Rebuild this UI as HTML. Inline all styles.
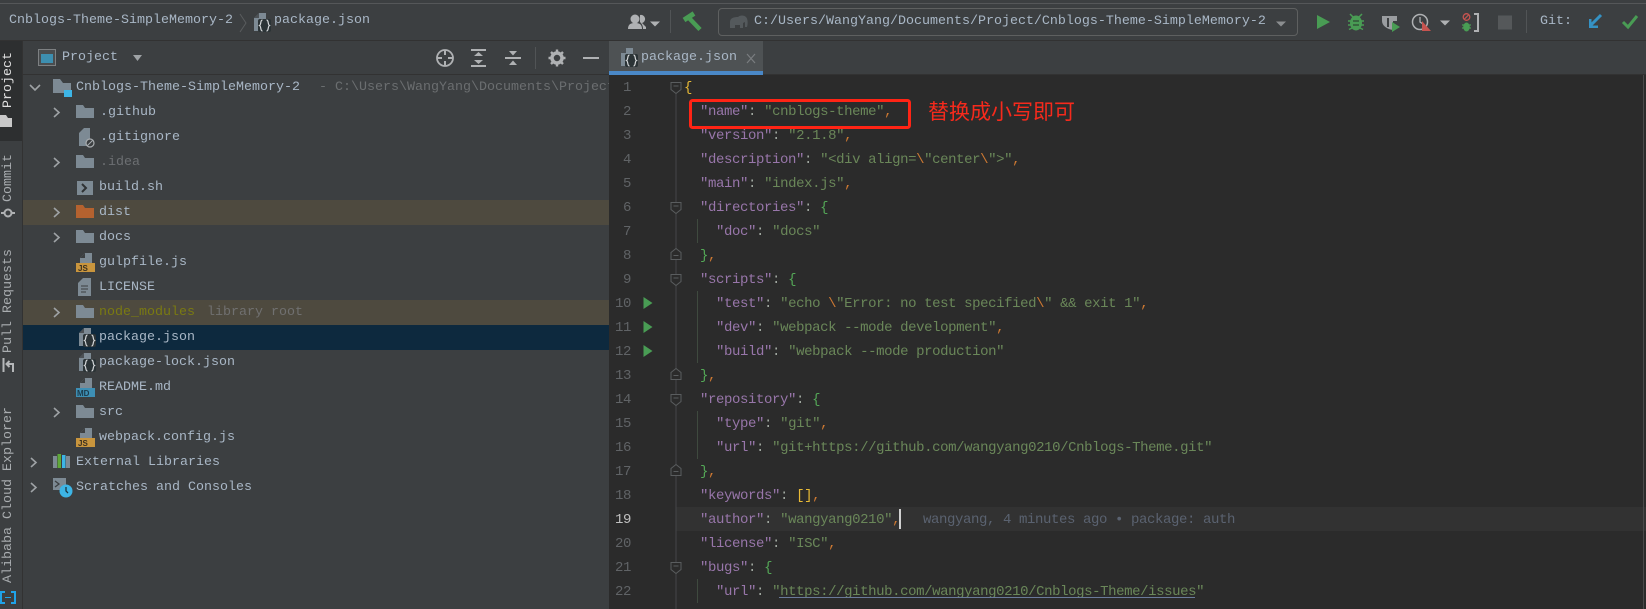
<!DOCTYPE html>
<html><head><meta charset="utf-8"><style>
html,body{margin:0;padding:0;background:#3c3f41}
#r{position:relative;width:1646px;height:609px;overflow:hidden;background:#3c3f41;font-family:"Liberation Mono",monospace;font-size:13.33px;color:#a9b7c6}
#r div{position:absolute;white-space:pre}
.t{height:25px;line-height:25px}
#r .v{writing-mode:vertical-rl;transform:rotate(180deg);left:1px;width:15px;line-height:15px;text-align:left;color:#a9adb0}
.l{left:684px;height:24px;line-height:24px;font-size:14px;letter-spacing:-.4px;color:#a9b7c6;margin-top:1px}
.n{left:600px;width:31px;text-align:right;height:24px;line-height:24px;font-size:14px;letter-spacing:-.4px;color:#606366;margin-top:1px}
i{font-style:normal}.k{color:#9876aa}.s{color:#6a8759}.c{color:#cc7832}.y{color:#e8ba36}.g{color:#54a857}.p{color:#a0a8a0}
svg{position:absolute;left:0;top:0}
</style></head><body><div id="r">
<div style="left:0;top:3px;width:1646px;height:1px;background:#555759"></div>
<div style="left:0;top:40px;width:1646px;height:1px;background:#323232"></div>
<div style="left:0;top:41px;width:22px;height:100px;background:#2d2f30"></div>
<div style="left:22px;top:41px;width:1px;height:568px;background:#323232"></div>
<div style="left:23px;top:74px;width:586px;height:1px;background:#323232"></div>
<div style="left:23px;top:200px;width:586px;height:25px;background:#4e4a3f"></div>
<div style="left:23px;top:300px;width:586px;height:25px;background:#4e4a3f"></div>
<div style="left:23px;top:325px;width:586px;height:25px;background:#0d293e"></div>
<div style="left:609px;top:75px;width:1037px;height:534px;background:#2b2b2b"></div>
<div style="left:609px;top:74px;width:1037px;height:1px;background:#323232"></div>
<div style="left:609px;top:41px;width:154px;height:30px;background:#4e5254"></div>
<div style="left:609px;top:71px;width:154px;height:4px;background:#4a88c7"></div>
<div style="left:676px;top:507px;width:970px;height:24px;background:#323232"></div>
<div style="left:1643px;top:75px;width:1px;height:534px;background:#4a4a4a"></div>
<div style="left:718px;top:8px;width:578px;height:26px;border:1.5px solid #5e6060;border-radius:4px"></div>

<div class="t" style="left:9px;top:8px">Cnblogs-Theme-SimpleMemory-2</div>
<div class="t" style="left:274px;top:8px">package.json</div>
<div class="t" style="left:754px;top:9px">C:/Users/WangYang/Documents/Project/Cnblogs-Theme-SimpleMemory-2</div>
<div class="t" style="left:1540px;top:9px">Git:</div>
<div class="t" style="left:62px;top:45px">Project</div>
<div class="t" style="left:641px;top:45px">package.json</div>

<div class="v" style="top:52px;height:56px;color:#e0e0e0">Project</div>
<div class="v" style="top:154px;height:48px">Commit</div>
<div class="v" style="top:249px;height:104px">Pull Requests</div>
<div class="v" style="top:407px;height:176px">Alibaba Cloud Explorer</div>

<div class="t" style="left:76px;top:75px">Cnblogs-Theme-SimpleMemory-2</div>
<div class="t" style="left:319px;top:75px;width:290px;overflow:hidden;color:#6b6e70">- C:\Users\WangYang\Documents\Project</div>
<div class="t" style="left:100px;top:100px">.github</div>
<div class="t" style="left:100px;top:125px">.gitignore</div>
<div class="t" style="left:100px;top:150px;color:#6c6f72">.idea</div>
<div class="t" style="left:99px;top:175px">build.sh</div>
<div class="t" style="left:99px;top:200px">dist</div>
<div class="t" style="left:99px;top:225px">docs</div>
<div class="t" style="left:99px;top:250px">gulpfile.js</div>
<div class="t" style="left:99px;top:275px">LICENSE</div>
<div class="t" style="left:99px;top:300px;color:#7a7a12">node_modules</div>
<div class="t" style="left:207px;top:300px;color:#707070">library root</div>
<div class="t" style="left:99px;top:325px">package.json</div>
<div class="t" style="left:99px;top:350px">package-lock.json</div>
<div class="t" style="left:99px;top:375px">README.md</div>
<div class="t" style="left:99px;top:400px">src</div>
<div class="t" style="left:99px;top:425px">webpack.config.js</div>
<div class="t" style="left:76px;top:450px">External Libraries</div>
<div class="t" style="left:76px;top:475px">Scratches and Consoles</div>

<div class="n" style="top:75px">1</div><div class="n" style="top:99px">2</div><div class="n" style="top:123px">3</div><div class="n" style="top:147px">4</div><div class="n" style="top:171px">5</div><div class="n" style="top:195px">6</div><div class="n" style="top:219px">7</div><div class="n" style="top:243px">8</div><div class="n" style="top:267px">9</div><div class="n" style="top:291px">10</div><div class="n" style="top:315px">11</div><div class="n" style="top:339px">12</div><div class="n" style="top:363px">13</div><div class="n" style="top:387px">14</div><div class="n" style="top:411px">15</div><div class="n" style="top:435px">16</div><div class="n" style="top:459px">17</div><div class="n" style="top:483px">18</div><div class="n" style="top:507px;color:#c0c0c0">19</div><div class="n" style="top:531px">20</div><div class="n" style="top:555px">21</div><div class="n" style="top:579px">22</div>

<div class="l y" style="top:75px">{</div>
<div class="l" style="top:99px">  <i class="k">"name"</i><i class="p">:</i> <i class="s">"cnblogs-theme"</i><i class="c">,</i></div>
<div class="l" style="top:123px">  <i class="k">"version"</i><i class="p">:</i> <i class="s">"2.1.8"</i><i class="c">,</i></div>
<div class="l" style="top:147px">  <i class="k">"description"</i><i class="p">:</i> <i class="s">"&lt;div align=</i><i class="c">\</i><i class="s">"center</i><i class="c">\</i><i class="s">"&gt;"</i><i class="c">,</i></div>
<div class="l" style="top:171px">  <i class="k">"main"</i><i class="p">:</i> <i class="s">"index.js"</i><i class="c">,</i></div>
<div class="l" style="top:195px">  <i class="k">"directories"</i><i class="p">:</i> <i class="g">{</i></div>
<div class="l" style="top:219px">    <i class="k">"doc"</i><i class="p">:</i> <i class="s">"docs"</i></div>
<div class="l" style="top:243px">  <i class="g">}</i><i class="c">,</i></div>
<div class="l" style="top:267px">  <i class="k">"scripts"</i><i class="p">:</i> <i class="g">{</i></div>
<div class="l" style="top:291px">    <i class="k">"test"</i><i class="p">:</i> <i class="s">"echo </i><i class="c">\</i><i class="s">"Error: no test specified</i><i class="c">\</i><i class="s">" &amp;&amp; exit 1"</i><i class="c">,</i></div>
<div class="l" style="top:315px">    <i class="k">"dev"</i><i class="p">:</i> <i class="s">"webpack --mode development"</i><i class="c">,</i></div>
<div class="l" style="top:339px">    <i class="k">"build"</i><i class="p">:</i> <i class="s">"webpack --mode production"</i></div>
<div class="l" style="top:363px">  <i class="g">}</i><i class="c">,</i></div>
<div class="l" style="top:387px">  <i class="k">"repository"</i><i class="p">:</i> <i class="g">{</i></div>
<div class="l" style="top:411px">    <i class="k">"type"</i><i class="p">:</i> <i class="s">"git"</i><i class="c">,</i></div>
<div class="l" style="top:435px">    <i class="k">"url"</i><i class="p">:</i> <i class="s">"git+https://github.com/wangyang0210/Cnblogs-Theme.git"</i></div>
<div class="l" style="top:459px">  <i class="g">}</i><i class="c">,</i></div>
<div class="l" style="top:483px">  <i class="k">"keywords"</i><i class="p">:</i> <i class="y">[]</i><i class="c">,</i></div>
<div class="l" style="top:507px">  <i class="k">"author"</i><i class="p">:</i> <i class="s">"wangyang0210"</i><i class="c">,</i></div>
<div class="l" style="left:923px;top:507px;color:#5a6270">wangyang, 4 minutes ago • package: auth</div>
<div class="l" style="top:531px">  <i class="k">"license"</i><i class="p">:</i> <i class="s">"ISC"</i><i class="c">,</i></div>
<div class="l" style="top:555px">  <i class="k">"bugs"</i><i class="p">:</i> <i class="g">{</i></div>
<div class="l" style="top:579px">    <i class="k">"url"</i><i class="p">:</i> <i class="s">"https://github.com/wangyang0210/Cnblogs-Theme/issues"</i></div>
<div class="l" style="top:603px">  <i class="g">}</i><i class="c">,</i></div>
<div style="left:779px;top:597px;width:416px;height:1px;background:#6a7a9a"></div>
<div style="left:899px;top:509px;width:2px;height:20px;background:#d0d0d0"></div>

<svg width="1646" height="609" viewBox="0 0 1646 609" fill="none">
<defs>
<path id="fo" d="M0 -7H7L9 -4H18V6H0Z"/>
<path id="cr" d="M0 0L5 4.500L0 9" stroke="#9ea2a5" stroke-width="1.600"/>
<g id="js"><path d="M4 0V-4L9 -9H16V1H4Z" fill="#7d8a94"/><path d="M4 -4H9V-9Z" fill="#3c3f41"/><rect x="0" y="1" width="19" height="9" fill="#c9953d"/><text x="2" y="9" font-family="Liberation Sans" font-size="8" font-weight="700" fill="#3a3020">JS</text></g>
<g id="md"><path d="M4 0V-4L9 -9H16V1H4Z" fill="#7d8a94"/><path d="M4 -4H9V-9Z" fill="#3c3f41"/><rect x="0" y="1" width="19" height="9" fill="#3d8fb5"/><text x="1" y="9" font-family="Liberation Sans" font-size="8" font-weight="700" fill="#1c3a4a">MD</text></g>
<g id="jn"><path d="M0 -4L5 -9H12V9H0Z" fill="#7d8a94"/><path d="M0 -4H5V-9Z" fill="#2b2b2b" opacity=".6"/><rect x="4" y="-3" width="13" height="13" rx="2" fill="#2b3336"/><path d="M8.500 -2C6 -2 7.500 2.500 5.500 3.500C7.500 4.500 6 9 8.500 9M12.500 -2C15 -2 13.500 2.500 15.500 3.500C13.500 4.500 15 9 12.500 9" stroke="#d5d8da" stroke-width="1.200"/></g>
<path id="fp" d="M.500 .500H10.500V7.500L5.500 11.500L.500 7.500Z M3 4H8" stroke="#5a5d5f" fill="#2b2b2b"/>
<path id="fc" d="M.500 11.500H10.500V4.500L5.500 .500L.500 4.500Z M3 7.500H8" stroke="#5a5d5f" fill="#2b2b2b"/>
<path id="rn" d="M0 -6L9 0L0 6Z" fill="#499c54"/>
</defs>

<!-- breadcrumb -->
<path d="M240 14L246 23L240 32" stroke="#5a5d5f"/>
<use href="#jn" x="254" y="22"/><use href="#jn" x="621" y="57"/>
<path d="M747 54L755 63M755 54L747 63" stroke="#7a7d80" stroke-width="1.200"/>

<!-- toolbar left -->
<g fill="#afb1b3"><circle cx="635" cy="19" r="4.500"/><path d="M628 29C628 24 631 23 635 23C639 23 642 24 642 29Z"/><path d="M640 15A4 4 0 0 1 642 23L646 27V29H643C643 26 642 24 640 22Z"/><path d="M650 21.500H660L655 26.500Z"/></g>
<path d="M670.500 10V33" stroke="#515456"/>
<path d="M700 29.500L689 18" stroke="#499c54" stroke-width="4.500"/><path d="M684 20L694 13.500" stroke="#499c54" stroke-width="5"/>
<path d="M730 28V22C730 18 734 17 738 17C740 15 744 15 746 17C748 19 748 24 747 27H745V22L743 23V28H740V25H735V28Z" fill="#54595c"/>
<path d="M1276 21.500H1286L1281 26.500Z" fill="#8b8e90"/>

<!-- run toolbar -->
<path d="M1317 15L1330 22L1317 29Z" fill="#499c54"/>
<path d="M1350 14L1353 17M1362 14L1359 17M1348 21H1364M1348 25H1364M1349 29.500L1352 28M1363 29.500L1360 28" stroke="#499c54" stroke-width="1.500"/>
<ellipse cx="1356" cy="23" rx="6" ry="7.500" fill="#499c54"/>
<path d="M1353 21H1359M1353 25H1359" stroke="#2f4a33" stroke-width="1.300"/>
<path d="M1382 16H1397V21H1393V30C1386 29 1382 25 1382 21Z" fill="#9a9da0"/><path d="M1388 18V27" stroke="#3c3f41" stroke-width="2"/>
<path d="M1392 22L1400 27L1392 32Z" fill="#499c54"/>
<circle cx="1420" cy="22" r="7.500" stroke="#afb1b3" stroke-width="1.500"/><path d="M1420 17V22L1423 24" stroke="#afb1b3" stroke-width="1.300"/>
<path d="M1422 21L1431 31H1422Z" fill="#c75450"/>
<path d="M1440 20.500H1450L1445 25.500Z" fill="#afb1b3"/>
<circle cx="1466.500" cy="17" r="3.300" stroke="#c75450" stroke-width="1.300"/><path d="M1464 19.500L1469 14.500" stroke="#c75450" stroke-width="1.200"/>
<path d="M1462 25H1471M1462 28H1471" stroke="#499c54" stroke-width="1.300"/><ellipse cx="1466.500" cy="27" rx="3.300" ry="4.500" fill="#499c54"/>
<path d="M1474 14H1478V31H1474" stroke="#afb1b3" stroke-width="2"/>
<rect x="1498" y="15.500" width="14" height="14" fill="#55585a"/>
<path d="M1526.500 10V33" stroke="#515456"/>
<path d="M1601 15L1591 25" stroke="#3592c4" stroke-width="3"/><path d="M1589 19V28H1598V25.500H1591.500V19Z" fill="#3592c4"/>
<path d="M1623 22L1628 27L1637 16" stroke="#499c54" stroke-width="3"/>

<!-- project panel toolbar -->
<rect x="38.500" y="49.500" width="17" height="16" stroke="#7d8082" fill="#4a4d4f"/><rect x="41" y="54" width="12" height="9" fill="#3d8fb0"/>
<path d="M133 55H142L137.500 61Z" fill="#9ea2a5"/>
<circle cx="445" cy="58" r="8" stroke="#afb1b3" stroke-width="1.800"/><path d="M445 50V55M445 61V66M437 58H442M448 58H453" stroke="#afb1b3" stroke-width="2"/>
<path d="M471 50H486M471 66H486" stroke="#afb1b3" stroke-width="2"/><path d="M474 56L478.500 52L483 56ZM474 60L478.500 64L483 60Z" fill="#afb1b3"/>
<path d="M505 58H521" stroke="#afb1b3" stroke-width="2"/><path d="M509 51L513 55.500L517 51ZM509 65L513 60.500L517 65Z" fill="#afb1b3"/>
<path d="M535.500 47V69" stroke="#515456"/>
<circle cx="557" cy="58" r="5" stroke="#afb1b3" stroke-width="3.500"/><path d="M557 49.500V52M557 64V66.500M548.500 58H551M563 58H565.500M551 52L553 54M561 62L563 64M563 52L561 54M553 62L551 64" stroke="#afb1b3" stroke-width="2.400"/>
<path d="M583 58H599" stroke="#afb1b3" stroke-width="2"/>

<!-- sidebar icons -->
<path d="M0 115H6L8 118H12V127H0Z" fill="#c8c8c8"/>
<circle cx="8" cy="213" r="3.500" stroke="#afb1b3" stroke-width="2"/><path d="M1 213H4M12 213H15" stroke="#afb1b3" stroke-width="2"/>
<path d="M3.500 358V372M13 372V364H7M9.500 361L6.500 364L9.500 367" stroke="#b5b7b9" stroke-width="2"/>
<path d="M5 592H1V603H5M11 592H15V603H11" stroke="#1fa3e8" stroke-width="2"/><path d="M5 597.500H11" stroke="#1fa3e8"/>

<!-- tree icons -->
<path d="M30 85L35 90L40 85" stroke="#9ea2a5" stroke-width="1.600"/>
<path d="M53 79H60L63 83H71V93H53Z" fill="#7d8a94"/><rect x="64" y="90" width="8" height="7" fill="#3db5e6"/>
<use href="#cr" x="54" y="108"/><use href="#cr" x="54" y="158"/><use href="#cr" x="54" y="208"/><use href="#cr" x="54" y="233"/><use href="#cr" x="54" y="308"/><use href="#cr" x="54" y="408"/>
<use href="#cr" x="31" y="458"/><use href="#cr" x="31" y="483"/>
<use href="#fo" x="76" y="112" fill="#7d8a94"/><use href="#fo" x="76" y="162" fill="#7d8a94"/><use href="#fo" x="76" y="212" fill="#b5622f"/><use href="#fo" x="76" y="237" fill="#7d8a94"/><use href="#fo" x="76" y="312" fill="#7d8a94"/><use href="#fo" x="76" y="412" fill="#7d8a94"/>
<path d="M79 133L84 128H90V146H79Z" fill="#7d8a94"/><circle cx="90" cy="143" r="4" fill="#3c3f41" stroke="#a9adb0" stroke-width="1.200"/><path d="M87.500 145.500L92.500 140.500" stroke="#a9adb0"/>
<rect x="77" y="181" width="16" height="14" fill="#7d8a94"/><path d="M82 184L86 188L82 192" stroke="#2f3234" stroke-width="2"/>
<use href="#js" x="76" y="262"/><use href="#js" x="76" y="437"/><use href="#md" x="76" y="387"/>
<path d="M78 283L83 278H91V296H78Z" fill="#7d8a94"/><path d="M81 286H88M81 289H88M81 292H86" stroke="#3c3f41"/>
<use href="#jn" x="79" y="337"/><use href="#jn" x="79" y="362"/>
<g fill="#7d8a94"><rect x="53" y="456" width="4" height="12"/><rect x="66" y="456" width="4" height="12"/></g><rect x="57.500" y="454" width="3.500" height="14" fill="#5fa83a"/><rect x="62" y="455" width="3.500" height="13" fill="#3db5e6"/>
<path d="M53 478H66V490H53Z" fill="#7d8a94"/><path d="M55 481L59 484L55 487" stroke="#3c3f41" stroke-width="1.300"/><circle cx="66" cy="491" r="6.500" fill="#3db5e6"/><path d="M66 487V491L68 493" stroke="#1d3540" stroke-width="1.300"/>

<!-- editor gutter -->
<path d="M676 94V609" stroke="#444648"/>
<use href="#fp" x="670.500" y="82"/><use href="#fp" x="670.500" y="202"/><use href="#fp" x="670.500" y="274"/><use href="#fp" x="670.500" y="394"/><use href="#fp" x="670.500" y="562"/>
<use href="#fc" x="670.500" y="248"/><use href="#fc" x="670.500" y="368"/><use href="#fc" x="670.500" y="464"/>
<path d="M697.500 219V243M697.500 291V363M697.500 411V459M697.500 579V603" stroke="#3f4a3f"/>
<use href="#rn" x="643.500" y="303"/><use href="#rn" x="643.500" y="327"/><use href="#rn" x="643.500" y="351"/>
<rect x="690.500" y="100.500" width="219" height="27" rx="2" stroke="#ff2415" stroke-width="3"/>
</svg>
<div style="left:928px;top:98px;height:30px;line-height:30px;font-size:21px;color:#f62a1c;font-family:'Liberation Sans','Noto Sans CJK SC',sans-serif">替换成小写即可</div>
</div></body></html>
